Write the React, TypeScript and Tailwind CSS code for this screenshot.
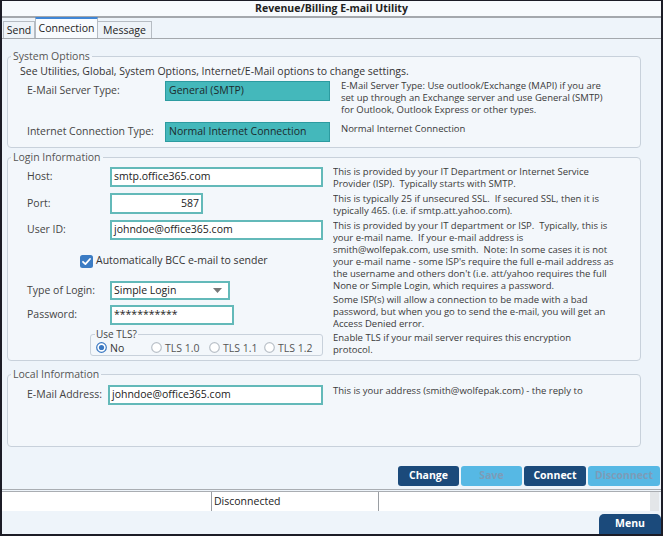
import React from 'react';

function Group({ title, className, children }: { title: string; className?: string; children: React.ReactNode }) {
  return (
    <fieldset className={`ml-[5px] w-[634px] rounded-[4px] border border-[#c8d1db] bg-[#f3f7fb] ${className ?? ''}`}>
      <legend className="ml-[3px] px-[2px] text-[10.5px] leading-[14px] text-[#555]">{title}</legend>
      {children}
    </fieldset>
  );
}

function Field({ w, value, right }: { w: string; value: string; right?: boolean }) {
  return (
    <div
      className={`${w} flex h-full items-center border-2 border-[#63b9b9] bg-white px-[2px] text-[10.5px] text-[#222] ${right ? 'justify-end' : ''}`}
    >
      {value}
    </div>
  );
}

function Radio({ label, on, w }: { label: string; on?: boolean; w: string }) {
  return (
    <div className={`${w} flex items-center gap-[3px]`}>
      <svg width="11" height="11" viewBox="0 0 11 11">
        <circle cx="5.5" cy="5.5" r="4.8" fill="white" stroke={on ? '#3a78c2' : '#b9c0c8'} strokeWidth="1.2" />
        {on && <circle cx="5.5" cy="5.5" r="2.6" fill="#3a78c2" />}
      </svg>
      <span className={on ? 'text-[#333]' : 'text-[#555]'}>{label}</span>
    </div>
  );
}

function Btn({ label, dark, w }: { label: string; dark?: boolean; w: string }) {
  return (
    <div
      className={`${w} flex h-[20px] items-center justify-center rounded-[3px] text-[10.5px] font-bold ${
        dark ? 'bg-[#1b4a7b] text-white' : 'bg-[#56b8e4] text-[#7c9cb8]'
      }`}
    >
      {label}
    </div>
  );
}

function Desc({ className, lines }: { className?: string; lines: string[] }) {
  return (
    <div className={`whitespace-pre text-[9.5px] leading-[12px] text-[#3a3a3a] ${className ?? ''}`}>
      {lines.map((l, i) => (
        <div key={i}>{l}</div>
      ))}
    </div>
  );
}

export default function App() {
  return (
    <div className="flex h-[536px] w-[663px] flex-col overflow-hidden border-x-2 border-t border-b-2 border-[#1c1c26] bg-[#eef4fa] font-['Open_Sans',sans-serif] text-[#333]">
      {/* title */}
      <div className="flex h-[17px] shrink-0 items-center justify-center border-b-2 border-[#a4a8ad] bg-[#f7fafd] text-[10.5px] font-bold text-[#222]">
        Revenue/Billing E-mail Utility
      </div>

      {/* tabs */}
      <div className="flex h-[21px] shrink-0 items-end border-b border-[#a4a8ad] pl-[1px] text-[10.5px] text-[#222]">
        <div className="flex h-[17px] w-[32px] items-center justify-center border border-b-0 border-[#b6bcc3] bg-[#eef3f8] pt-[1px]">Send</div>
        <div className="flex h-[21px] w-[63px] items-center justify-center border-x border-t-2 border-[#b6bcc3] border-t-[#3f86d6] bg-[#f8fbfe] pt-[1px]">
          Connection
        </div>
        <div className="flex h-[17px] w-[54px] items-center justify-center border border-b-0 border-l-0 border-[#b6bcc3] bg-[#eef3f8] pt-[1px]">Message</div>
      </div>

      {/* System Options */}
      <Group title="System Options" className="mt-[10px] pb-[5px]">
        <div className="ml-[12px] mt-[1px] text-[10.5px] leading-[14px] text-[#333]">
          See Utilities, Global, System Options, Internet/E-Mail options to change settings.
        </div>
        <div className="mt-[2px] flex items-start">
          <div className="mt-[1px] flex h-[20px] items-center">
            <span className="ml-[19px] w-[138px] text-[10.5px] text-[#444]">E-Mail Server Type:</span>
            <div className="flex h-[20px] w-[165px] items-center border border-[#2c9ba0] bg-[#44b8bb] px-[3px] text-[10.5px] text-[#1c2a2c]">
              General (SMTP)
            </div>
          </div>
          <Desc
            className="ml-[11px]"
            lines={[
              'E-Mail Server Type: Use outlook/Exchange (MAPI) if you are',
              'set up through an Exchange server and use General (SMTP)',
              'for Outlook, Outlook Express or other types.',
            ]}
          />
        </div>
        <div className="mt-[6px] flex items-start">
          <div className="flex h-[20px] items-center">
            <span className="ml-[19px] w-[138px] text-[10.5px] text-[#444]">Internet Connection Type:</span>
            <div className="flex h-[20px] w-[165px] items-center border border-[#2c9ba0] bg-[#44b8bb] px-[3px] text-[10.5px] text-[#1c2a2c]">
              Normal Internet Connection
            </div>
          </div>
          <Desc className="ml-[11px] mt-[1px]" lines={['Normal Internet Connection']} />
        </div>
      </Group>

      {/* Login Information */}
      <Group title="Login Information" className="mt-[2px] pb-[4px]">
        <div className="flex">
          <div className="w-[325px] text-[10.5px] text-[#444]">
            <div className="mt-[3px] flex h-[20px] items-center">
              <span className="ml-[19px] w-[83px]">Host:</span>
              <Field w="w-[213px]" value="smtp.office365.com" />
            </div>
            <div className="mt-[6px] flex h-[21px] items-center">
              <span className="ml-[19px] w-[83px]">Port:</span>
              <Field w="w-[93px]" value="587" right />
            </div>
            <div className="mt-[6px] flex h-[20px] items-center">
              <span className="ml-[19px] w-[83px]">User ID:</span>
              <Field w="w-[213px]" value="johndoe@office365.com" />
            </div>
            <div className="ml-[72px] mt-[14px] flex h-[14px] items-center gap-[3px]">
              <svg width="13" height="13" viewBox="0 0 13 13">
                <rect x="0" y="0" width="13" height="13" rx="2.5" fill="#3b7cc4" />
                <path d="M3 6.8 L5.4 9.1 L10 4" fill="none" stroke="white" strokeWidth="1.8" strokeLinecap="round" strokeLinejoin="round" />
              </svg>
              <span className="text-[#333]">Automatically BCC e-mail to sender</span>
            </div>
            <div className="mt-[13px] flex h-[19px] items-center">
              <span className="ml-[19px] w-[83px]">Type of Login:</span>
              <div className="flex h-full w-[120px] items-center justify-between border-2 border-[#63b9b9] bg-white pl-[2px] pr-[6px] text-[#222]">
                Simple Login
                <svg width="9" height="5" viewBox="0 0 9 5">
                  <path d="M0 0 H9 L4.5 5 Z" fill="#777" />
                </svg>
              </div>
            </div>
            <div className="mt-[5px] flex h-[20px] items-center">
              <span className="ml-[19px] w-[83px]">Password:</span>
              <Field w="w-[124px]" value="***********" />
            </div>
            <fieldset className="ml-[82px] mt-[3px] w-[233px] rounded-[3px] border border-[#c8d1db] pb-[1px]">
              <legend className="ml-[4px] px-[1px] text-[10px] leading-[12px] text-[#444]">Use TLS?</legend>
              <div className="flex h-[14px] items-center pl-[5px] pt-[1px] text-[10.5px] leading-[12px]">
                <Radio label="No" on w="w-[55px]" />
                <Radio label="TLS 1.0" w="w-[58px]" />
                <Radio label="TLS 1.1" w="w-[55px]" />
                <Radio label="TLS 1.2" w="w-[55px]" />
              </div>
            </fieldset>
          </div>
          <div className="w-[300px] overflow-hidden">
            <Desc
              className="mt-[2px]"
              lines={['This is provided by your IT Department or Internet Service', 'Provider (ISP).  Typically starts with SMTP.']}
            />
            <Desc
              className="mt-[3px]"
              lines={['This is typically 25 if unsecured SSL.  If secured SSL, then it is', 'typically 465. (i.e. if smtp.att.yahoo.com).']}
            />
            <Desc
              className="mt-[3px] h-[60px]"
              lines={[
                'This is provided by your IT department or ISP.  Typically, this is',
                'your e-mail name.  If your e-mail address is',
                'smith@wolfepak.com, use smith.  Note: In some cases it is not',
                "your e-mail name - some ISP's require the full e-mail address as",
                "the username and others don't (i.e. att/yahoo requires the full",
              ]}
            />
            <Desc lines={['None or Simple Login, which requires a password.']} />
            <Desc
              className="mt-[2px]"
              lines={[
                'Some ISP(s) will allow a connection to be made with a bad',
                'password, but when you go to send the e-mail, you will get an',
                'Access Denied error.',
              ]}
            />
            <Desc className="mt-[2px]" lines={['Enable TLS if your mail server requires this encryption', 'protocol.']} />
          </div>
        </div>
      </Group>

      {/* Local Information */}
      <Group title="Local Information" className="mt-[6px] pb-[41px]">
        <div className="mt-[4px] flex items-start">
          <div className="flex h-[20px] w-[325px] items-center text-[10.5px] text-[#444]">
            <span className="ml-[19px] w-[81px]">E-Mail Address:</span>
            <Field w="w-[215px]" value="johndoe@office365.com" />
          </div>
          <Desc lines={['This is your address (smith@wolfepak.com) - the reply to']} />
        </div>
      </Group>

      {/* buttons */}
      <div className="mt-[19px] flex justify-end gap-[2px] pr-[1px]">
        <Btn label="Change" dark w="w-[61px]" />
        <Btn label="Save" w="w-[61px]" />
        <Btn label="Connect" dark w="w-[62px]" />
        <Btn label="Disconnect" w="w-[72px]" />
      </div>

      {/* status bar */}
      <div className="mt-[3px] flex h-[22px] shrink-0 border-t-[3px] border-double border-[#a9adb2] text-[10.5px] text-[#222]">
        <div className="w-[209px] bg-white" />
        <div className="flex w-[167px] items-center border-l border-[#9a9ea3] bg-white pl-[2px]">Disconnected</div>
        <div className="w-[272px] border-l border-[#9a9ea3] bg-white" />
        <div className="w-[9px] bg-[#e3e6e9]" />
      </div>

      {/* menu */}
      <div className="mt-[3px] flex flex-1 justify-end">
        <div className="flex w-[62px] items-center justify-center rounded-t-[5px] bg-[#1b4a7b] text-[10.5px] font-bold text-white">Menu</div>
      </div>
    </div>
  );
}
